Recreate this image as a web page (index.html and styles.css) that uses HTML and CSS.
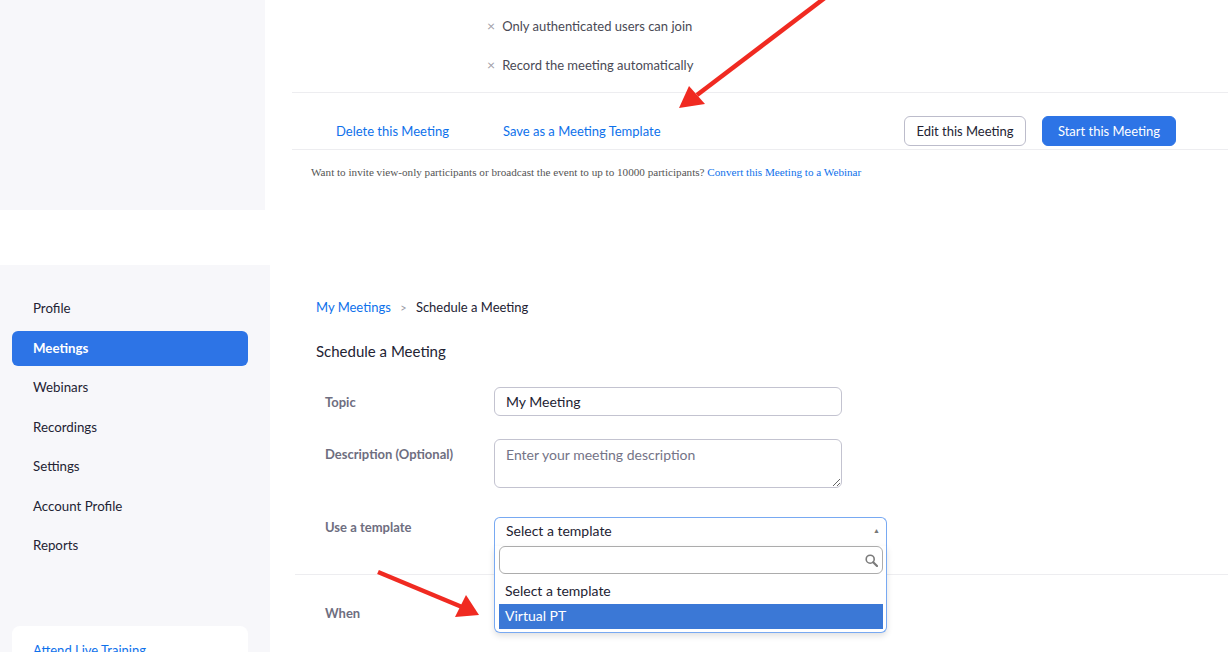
FILE: index.html
```html
<!DOCTYPE html>
<html>
<head>
    <title>Schedule a Meeting</title>
    <link rel="stylesheet" href="styles.css">
</head>
<body>
    <div class="shot shot-top">
        <aside class="side"></aside>
        <main class="main-top">
            <ul class="opts">
                <li><span class="x">×</span>Only authenticated users can join</li>
                <li><span class="x">×</span>Record the meeting automatically</li>
            </ul>
            <div class="actions">
                <a class="link" href="#">Delete this Meeting</a>
                <a class="link link-save" href="#">Save as a Meeting Template</a>
                <span class="spacer"></span>
                <button class="btn btn-outline">Edit this Meeting</button>
                <button class="btn btn-primary">Start this Meeting</button>
            </div>
            <p class="note">Want to invite view-only participants or broadcast the event to up to 10000 participants? <a href="#">Convert this Meeting to a Webinar</a></p>
        </main>
    </div>

    <div class="shot shot-bottom">
        <aside class="side side-nav">
            <ul class="nav">
                <li>Profile</li>
                <li class="active">Meetings</li>
                <li>Webinars</li>
                <li>Recordings</li>
                <li>Settings</li>
                <li>Account Profile</li>
                <li>Reports</li>
            </ul>
            <div class="card">
                <a href="#">Attend Live Training</a>
            </div>
        </aside>
        <main class="main">
            <div class="crumbs">
                <a href="#">My Meetings</a>
                <span class="sep">&gt;</span>
                <span>Schedule a Meeting</span>
            </div>
            <h1>Schedule a Meeting</h1>

            <div class="row row-topic">
                <label>Topic</label>
                <input class="field" type="text" value="My Meeting">
            </div>
            <div class="row row-desc">
                <label>Description (Optional)</label>
                <textarea class="field area" placeholder="Enter your meeting description"></textarea>
            </div>
            <div class="row row-template">
                <label class="label-tight">Use a template</label>
                <div class="select">
                    <div class="select-head">
                        <span>Select a template</span>
                        <span class="caret">▲</span>
                    </div>
                    <div class="dropdown">
                        <div class="search">
                            <svg width="13" height="13" viewBox="0 0 13 13">
                                <circle cx="5.2" cy="5.2" r="4" fill="none" stroke="#7b7b7b" stroke-width="1.6"/>
                                <path d="M8.2 8.2 L12 12" stroke="#7b7b7b" stroke-width="2.2" stroke-linecap="round"/>
                            </svg>
                        </div>
                        <div class="option">Select a template</div>
                        <div class="option selected">Virtual PT</div>
                    </div>
                </div>
            </div>
            <div class="row row-when">
                <label>When</label>
            </div>
        </main>
    </div>

    <svg class="arrows" width="1228" height="652" viewBox="0 0 1228 652">
        <line x1="826" y1="-3" x2="697" y2="95" stroke="#f02a21" stroke-width="4.5"/>
        <polygon points="679,108 689,86 705,104" fill="#f02a21"/>
        <line x1="378" y1="572" x2="462" y2="607" stroke="#f02a21" stroke-width="4.5"/>
        <polygon points="479,615 466,595 455,617" fill="#f02a21"/>
    </svg>
</body>
</html>
```

FILE: styles.css
```css
body {
    margin: 0;
    font-family: Lato, "Open Sans", sans-serif;
    color: #232333;
    background: #fff;
    position: relative;
    width: 1228px;
    height: 652px;
    overflow: hidden;
}
a {
    color: #0e71eb;
    text-decoration: none;
}
.shot {
    display: flex;
}
.shot-top {
    height: 210px;
    margin-bottom: 55px;
}
.side {
    width: 265px;
    flex: none;
    background: #f7f7fa;
}
.main-top {
    flex: 1;
    padding-left: 27px;
}
.opts {
    list-style: none;
    margin: 0;
    padding: 6px 0 8px 195px;
    border-bottom: 1px solid #ededf0;
    font-size: 13px;
    color: #4a4a55;
}
.opts li {
    height: 39px;
    line-height: 39px;
}
.x {
    color: #a0a0a8;
    font-size: 14px;
    margin-right: 7px;
}
.actions {
    display: flex;
    align-items: center;
    padding: 23px 52px 3px 44px;
    border-bottom: 1px solid #ededf0;
}
.link {
    font-size: 13px;
}
.link-save {
    margin-left: 54px;
}
.spacer {
    flex: 1;
}
.btn {
    height: 30px;
    border-radius: 6px;
    font-family: Lato, sans-serif;
    font-size: 13px;
    padding: 0;
    white-space: nowrap;
}
.btn-outline {
    background: #fff;
    border: 1px solid #bcbccb;
    color: #232333;
    width: 122px;
}
.btn-primary {
    background: #2d74e6;
    border: 1px solid #2d74e6;
    color: #fff;
    width: 134px;
    margin-left: 16px;
}
.note {
    margin: 0;
    padding: 15px 0 0 19px;
    font-family: "Liberation Serif", serif;
    font-size: 11.15px;
    line-height: 14px;
    color: #555;
}

.shot-bottom {
    height: 387px;
}
.side-nav {
    width: 270px;
    padding-top: 26px;
    box-sizing: border-box;
}
.nav {
    list-style: none;
    margin: 0;
    padding: 0;
    display: flex;
    flex-direction: column;
    gap: 4.5px;
}
.nav li {
    height: 35px;
    line-height: 35px;
    margin: 0 22px 0 12px;
    padding-left: 21px;
    font-size: 13.3px;
    border-radius: 6px;
}
.nav li.active {
    background: #2d74e6;
    color: #fff;
    font-weight: bold;
}
.card {
    margin: 63px 22px 0 12px;
    background: #fff;
    border-radius: 8px;
    padding: 16px 21px;
    font-size: 13px;
}
.main {
    flex: 1;
    padding-left: 25px;
}
.crumbs {
    padding: 32px 0 0 21px;
    font-size: 13px;
    line-height: 20px;
}
.sep {
    color: #9a9aa6;
    font-size: 11px;
    margin: 0 6px;
}
h1 {
    margin: 22px 0 25px 21px;
    font-size: 15px;
    font-weight: normal;
    line-height: 22px;
}
.row {
    display: flex;
    padding-left: 30px;
}
.row label {
    width: 169px;
    flex: none;
    padding-top: 6px;
    line-height: 18px;
    font-size: 13px;
    font-weight: bold;
    color: #6e6e80;
}
.row label.label-tight {
    padding-top: 1px;
}
.row-topic {
    margin-bottom: 23px;
}
.row-desc {
    margin-bottom: 29px;
}
.row-template {
    padding-bottom: 28px;
    border-bottom: 1px solid #ededf0;
}
.row-when {
    padding-top: 23px;
}
.field {
    width: 348px;
    height: 29px;
    box-sizing: border-box;
    border: 1px solid #c3c3d0;
    border-radius: 6px;
    padding: 0 11px;
    font-family: Lato, sans-serif;
    font-size: 14px;
    color: #232333;
}
.area {
    height: 49px;
    padding-top: 6px;
    resize: both;
}
.area::placeholder {
    color: #747487;
}
.select {
    position: relative;
    width: 393px;
}
.select-head {
    height: 29px;
    box-sizing: border-box;
    border: 1px solid #78a9f2;
    border-bottom: none;
    border-radius: 6px 6px 0 0;
    display: flex;
    align-items: center;
    justify-content: space-between;
    padding: 0 6px 3px 11px;
    font-size: 14px;
}
.caret {
    font-size: 7px;
    color: #777;
    margin-top: -2px;
}
.dropdown {
    position: absolute;
    top: 29px;
    left: 0;
    right: 0;
    background: #fff;
    border: 1px solid #78a9f2;
    border-top: none;
    border-radius: 0 0 6px 6px;
    padding: 0 3px 3px 4px;
    box-shadow: 0 3px 6px rgba(0, 0, 0, 0.12);
    z-index: 2;
}
.search {
    height: 28px;
    box-sizing: border-box;
    border: 1px solid #acacac;
    border-radius: 6px;
    display: flex;
    align-items: center;
    justify-content: flex-end;
    padding-right: 4px;
    margin-bottom: 4px;
}
.option {
    height: 26px;
    line-height: 26px;
    padding-left: 6px;
    font-size: 14px;
}
.option.selected {
    height: 25px;
    line-height: 24px;
    background: #3b78d6;
    color: #fff;
}
.arrows {
    position: absolute;
    top: 0;
    left: 0;
    pointer-events: none;
    z-index: 5;
}
```
